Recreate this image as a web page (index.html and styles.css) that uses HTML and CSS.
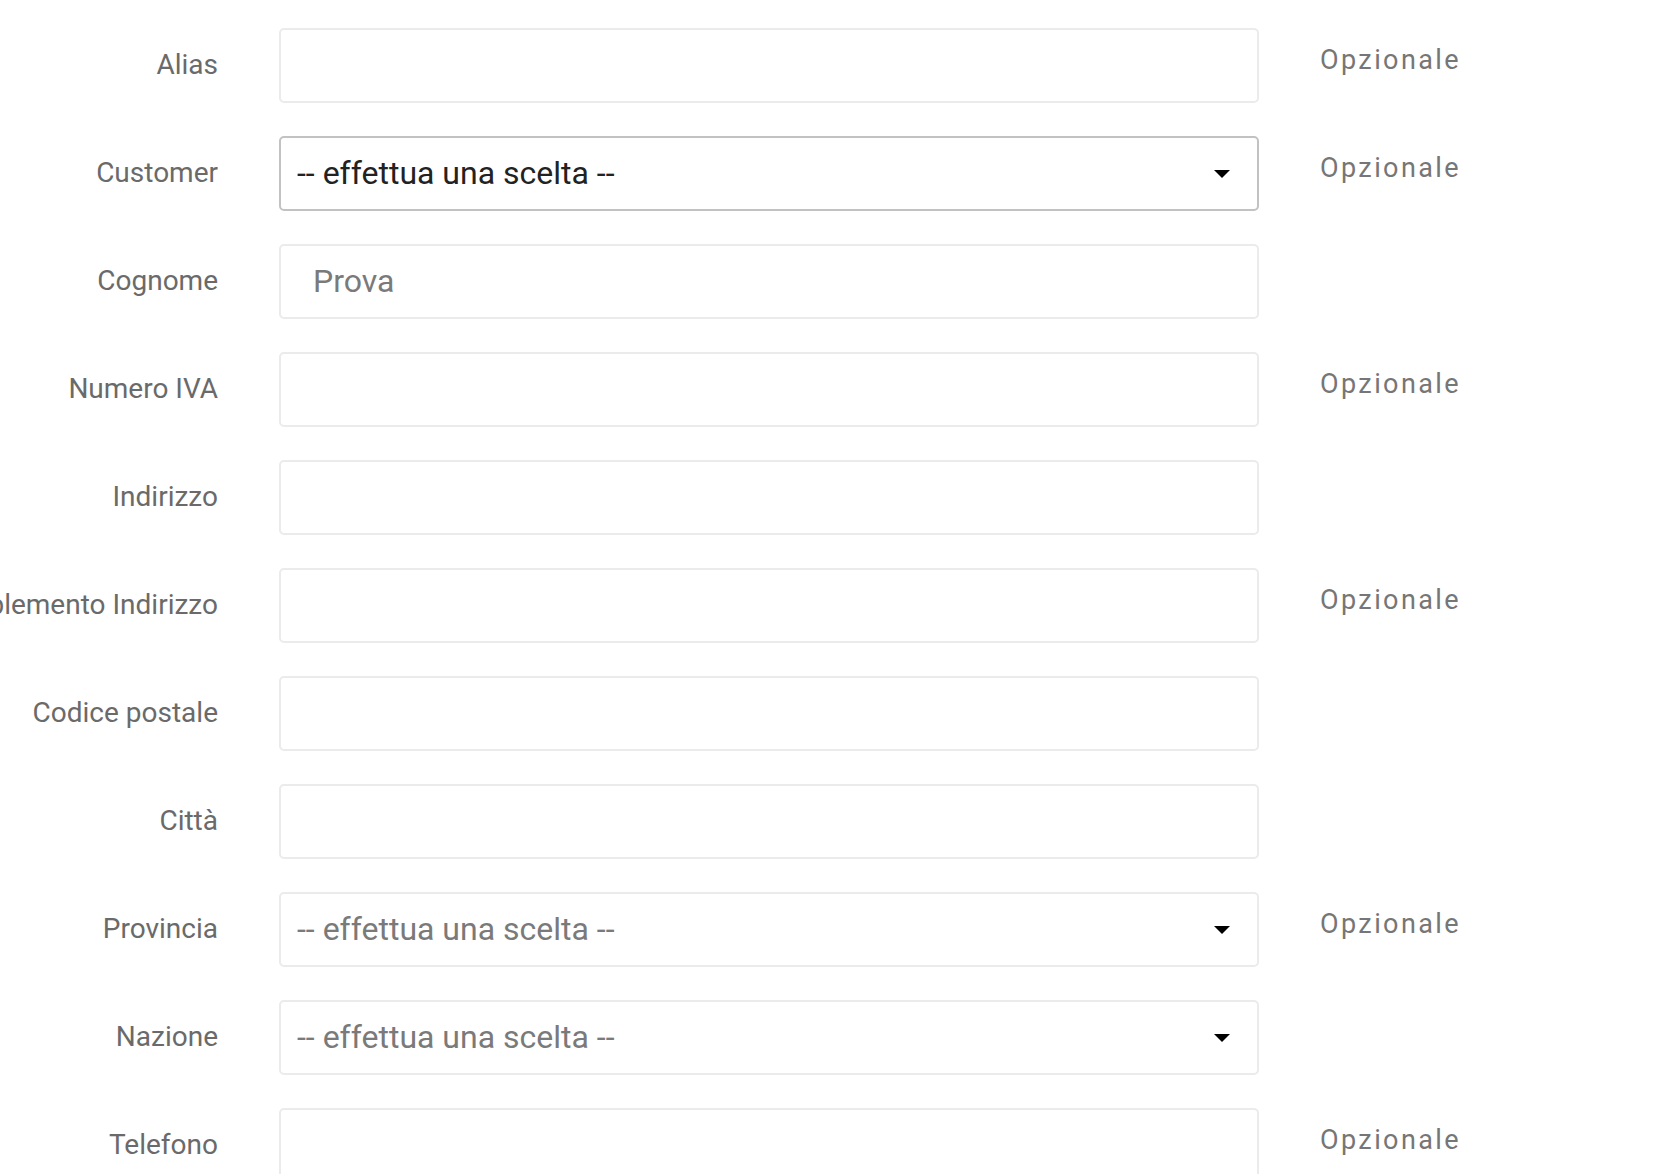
FILE: index.html
```html
<!DOCTYPE html>
<html lang="it">
<head>
<meta charset="utf-8">
<title>Form</title>
<link rel="stylesheet" href="styles.css">
</head>
<body>
<form class="form">
  <label class="lbl">Alias</label>
  <div class="field"></div>
  <span class="opt">Opzionale</span>

  <label class="lbl">Customer</label>
  <div class="field select dark"><span class="val">-- effettua una scelta --</span><svg class="caret" viewBox="0 0 16 8"><path d="M0 0H16L8 8Z"/></svg></div>
  <span class="opt">Opzionale</span>

  <label class="lbl">Cognome</label>
  <div class="field text"><span class="val">Prova</span></div>
  <span class="opt"></span>

  <label class="lbl">Numero IVA</label>
  <div class="field"></div>
  <span class="opt">Opzionale</span>

  <label class="lbl">Indirizzo</label>
  <div class="field"></div>
  <span class="opt"></span>

  <label class="lbl">Complemento Indirizzo</label>
  <div class="field"></div>
  <span class="opt">Opzionale</span>

  <label class="lbl">Codice postale</label>
  <div class="field"></div>
  <span class="opt"></span>

  <label class="lbl">Città</label>
  <div class="field"></div>
  <span class="opt"></span>

  <label class="lbl">Provincia</label>
  <div class="field select"><span class="val">-- effettua una scelta --</span><svg class="caret" viewBox="0 0 16 8"><path d="M0 0H16L8 8Z"/></svg></div>
  <span class="opt">Opzionale</span>

  <label class="lbl">Nazione</label>
  <div class="field select"><span class="val">-- effettua una scelta --</span><svg class="caret" viewBox="0 0 16 8"><path d="M0 0H16L8 8Z"/></svg></div>
  <span class="opt"></span>

  <label class="lbl">Telefono</label>
  <div class="field"></div>
  <span class="opt">Opzionale</span>
</form>
</body>
</html>
```
FILE: styles.css
```css
html, body {
  margin: 0;
  padding: 0;
  background: #ffffff;
  overflow: hidden;
}
body {
  font-family: Roboto, "Noto Sans", "Liberation Sans", sans-serif;
  width: 1676px;
  height: 1174px;
}
.form {
  display: grid;
  grid-template-columns: 218px 980px 300px;
  column-gap: 61px;
  row-gap: 33px;
  padding-top: 28px;
}
.lbl {
  justify-self: end;
  align-self: center;
  margin-bottom: 3px;
  white-space: nowrap;
  font-size: 28px;
  color: #6a6a6a;
}
.field {
  box-sizing: border-box;
  height: 75px;
  border: 2px solid #ebebeb;
  border-radius: 5px;
  background: #fff;
  display: flex;
  align-items: center;
}
.field.dark {
  border-color: #c2c2c2;
}
.val {
  font-size: 32px;
  color: #7a7a7a;
  white-space: nowrap;
  margin-bottom: 1px;
}
.select {
  padding: 0 27px 0 16px;
  justify-content: space-between;
}
.select.dark .val {
  color: #222222;
}
.text {
  padding-left: 32px;
}
.caret {
  width: 16px;
  height: 8px;
  fill: #000;
}
.opt {
  align-self: start;
  padding-top: 16px;
  font-size: 27px;
  letter-spacing: 2.4px;
  color: #767676;
}
```
